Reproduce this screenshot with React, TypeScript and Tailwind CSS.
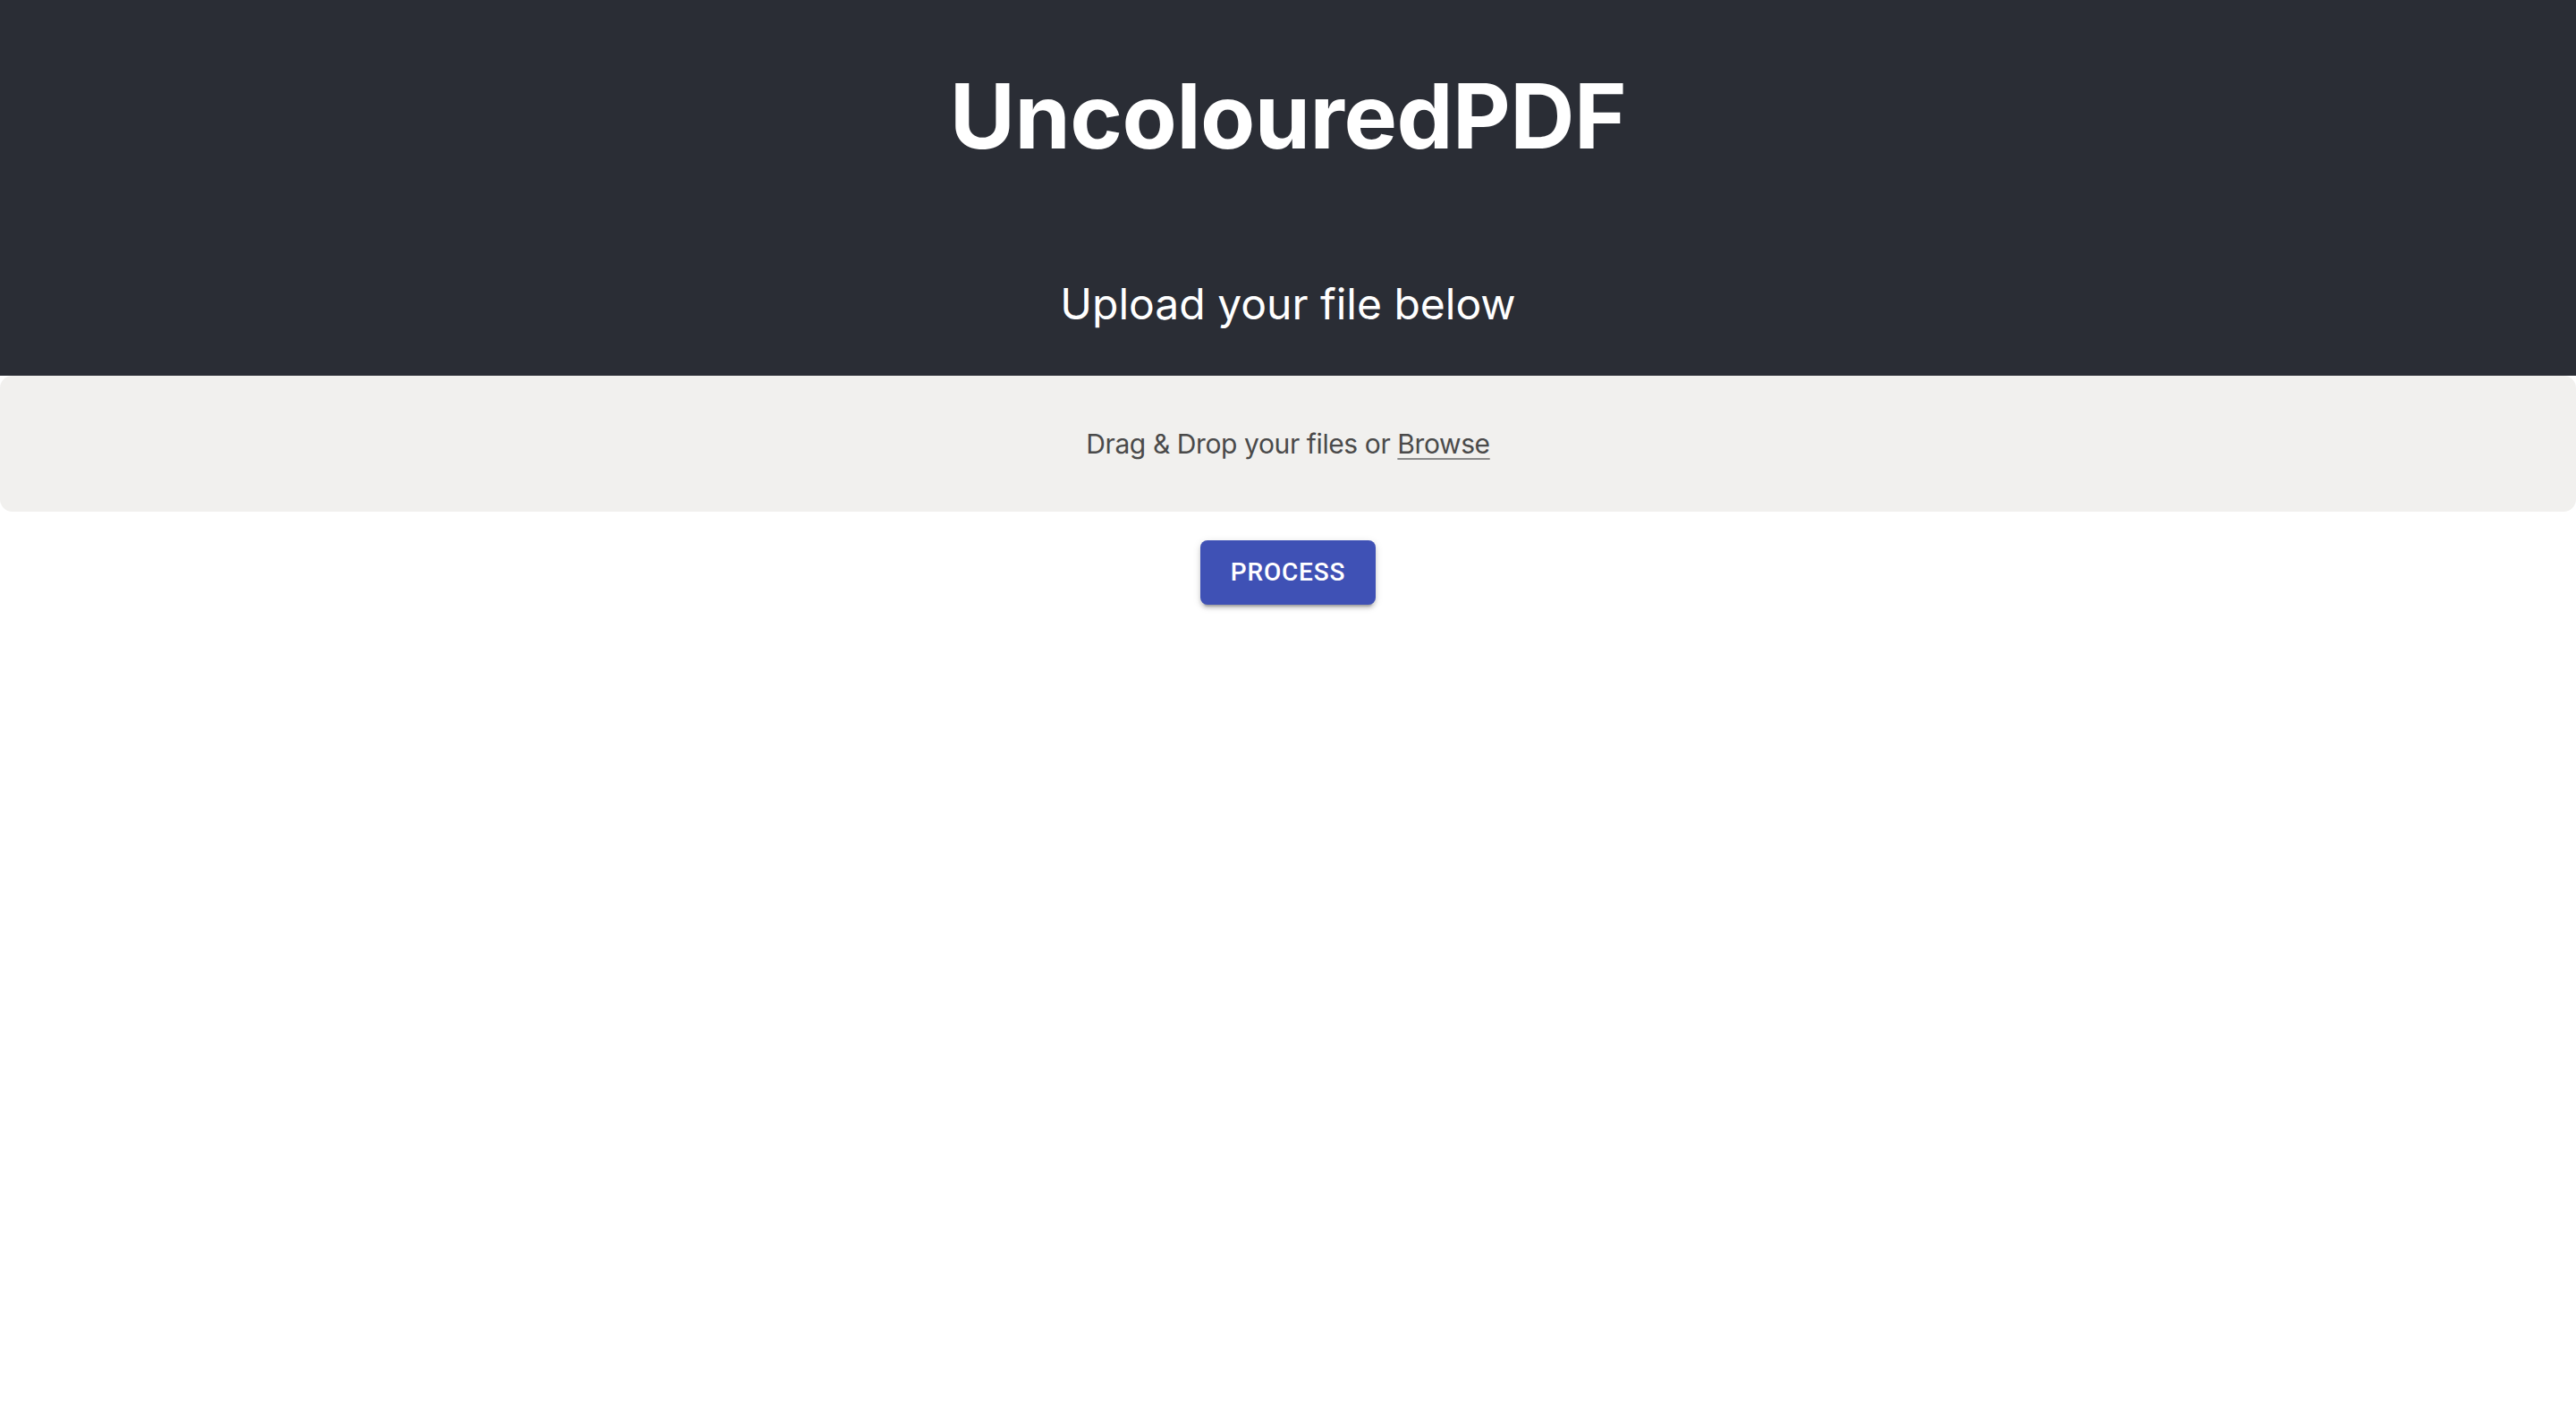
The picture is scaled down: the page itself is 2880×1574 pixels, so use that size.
export default function App() {
  return (
    <div className="min-h-screen bg-white" style={{ fontFamily: 'Inter, "Liberation Sans", sans-serif' }}>
      <header className="bg-[#2a2d35] text-white text-center pt-[80px] pb-[56px]">
        <h1 className="text-[100px] leading-none font-bold tracking-[-0.5px]">UncolouredPDF</h1>
        <p className="mt-[136px] text-[48px] leading-none font-normal">Upload your file below</p>
      </header>

      <div className="bg-[#f1f0ee] rounded-[14px] h-[152px] flex items-center justify-center">
        <div className="text-[30px] leading-none tracking-[-0.4px] text-[#4a4a4a]">
          Drag &amp; Drop your files or{' '}
          <span className="underline decoration-[#8a8a8a] decoration-2 underline-offset-[5px] cursor-pointer">Browse</span>
        </div>
      </div>

      <div className="flex justify-center mt-[32px]">
        <button
          className="bg-[#3f51b5] text-white rounded-[8px] h-[72px] w-[196px] text-[28px] font-medium tracking-[0.8px] uppercase shadow-[0_6px_2px_-4px_rgba(0,0,0,0.2),0_4px_4px_0_rgba(0,0,0,0.14),0_2px_10px_0_rgba(0,0,0,0.12)]"
          style={{ fontFamily: 'Roboto, "Liberation Sans", sans-serif' }}
        >
          Process
        </button>
      </div>
    </div>
  );
}
